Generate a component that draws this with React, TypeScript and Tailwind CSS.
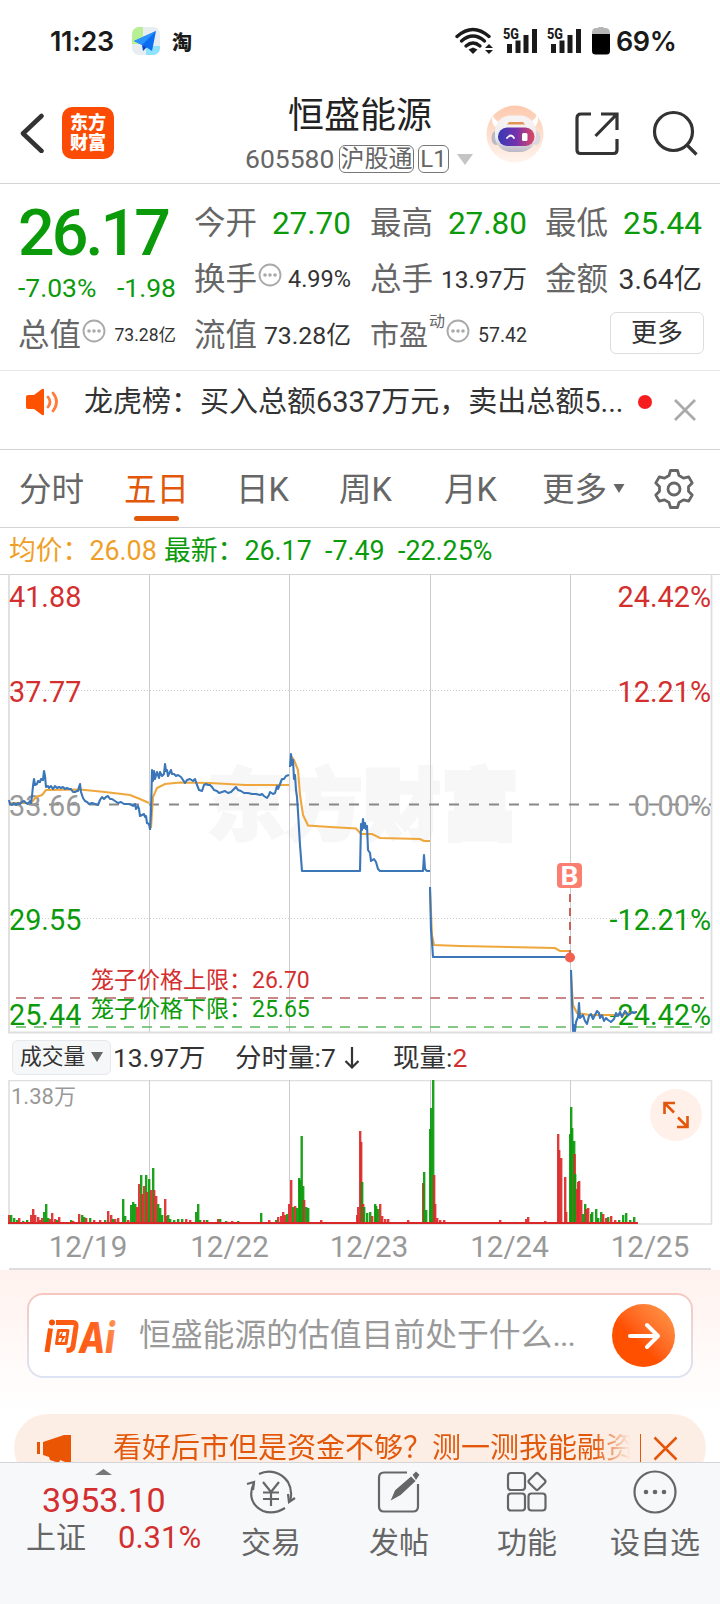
import React from 'react';

type Bar = [number, number, 'r' | 'g'];

const GREEN = '#0a9a0a';
const RED = '#d32f2f';
const DAY_LINES = [149.5, 289.5, 430.5, 570.5];

const PRICE_DAYS = [
  '9,800 10,804 12,805 14,803 16,805 18,803 20,804 22,802 24,801 26,803 28,804 30,801 31,803 32,796 33,786 34,779 35,785 37,784 38,781 40,782 41,779 43,780 44,771 45,776 46,787 48,786 49,788 51,786 53,789 55,786 57,788 59,787 61,788 63,787 65,789 67,788 69,789 71,789 73,792 75,792 77,791 78,791 79,787 80,784 81,792 83,798 85,801 87,802 89,804 92,803 95,804 98,805 100,800 102,797 104,799 106,797 108,796 110,799 112,799 115,801 118,803 121,802 124,804 127,804 130,804 133,806 135,804 136,809 138,806 139,809 140,816 142,815 144,814 145,817 146,816 147,823 149,824 150,829',
  '150,830 151,812 152,770 153,781 154,771 155,779 157,772 159,778 160,772 162,776 164,774 165,764 166,771 167,770 168,776 170,772 171,770 172,774 174,774 176,776 178,775 181,777 183,780 185,783 187,780 190,779 193,781 195,779 197,785 199,790 202,791 204,785 206,784 208,785 210,785 212,787 214,790 217,791 219,793 222,792 225,791 228,793 231,792 234,789 236,787 238,790 241,791 244,793 248,793 252,794 256,794 260,795 262,794 264,796 267,798 269,795 270,792 273,794 275,793 277,786 278,789 280,784 282,779 284,779 286,776 289,775',
  '290,767 291,754 292,765 293,760 294,779 295,775 296,790 297,797 298,812 300,845 302,871 360,871 361,824 362,830 363,819 364,828 365,823 366,829 367,826 368,850 370,853 371,861 374,859 376,862 378,869 380,871 423,871 424,855 425,869 427,871 430,871',
  '430,887 431,930 432,942 433,957 570,957',
  '571,970 572,1001 573,1031 574,1025 575,1031 576,1022 578,1017 579,1003 580,1018 583,1015 585,1021 587,1024 589,1016 591,1014 593,1019 595,1015 597,1011 599,1013 600,1018 602,1015 604,1021 606,1018 608,1020 611,1022 614,1019 616,1013 618,1016 620,1012 622,1017 625,1011 628,1015 630,1014 632,1012 634,1013 636,1012 637,1012',
];

const AVG_DAYS = [
  '9,803 31,803 36,797 42,795 46,790 80,789.5 105,792 130,795 140,799 149,803',
  '151,828 153,797 157,788 165,784 180,782.5 210,783 245,785 289,785',
  '291,756 294,760 298,770 300,795 303,815 308,825.5 330,827 356,828.5 361,834 372,834 380,838 420,839 424,841 430,841',
  '430,890 432,935 434,945 460,946 555,948 560,951 570,951',
  '571,975 573,1005 577,1013 590,1015 620,1015 637,1012',
];

const VOLUME: Bar[] = [
  [9, 9, 'r'], [11, 9, 'g'], [14, 6, 'g'], [17, 4, 'g'], [19, 6, 'r'], [23, 3, 'g'], [27, 4, 'g'], [31, 9, 'r'], [33, 15, 'r'], [35, 9, 'r'], [38, 7, 'r'], [40, 4, 'r'], [42, 6, 'r'], [44, 12, 'g'], [46, 20, 'g'], [48, 6, 'g'], [50, 5, 'r'], [52, 11, 'r'], [55, 5, 'r'], [57, 4, 'g'], [59, 7, 'r'],
  [71, 4, 'g'], [73, 3, 'r'], [79, 10, 'r'], [82, 9, 'g'], [84, 7, 'g'], [86, 6, 'r'], [90, 6, 'g'], [94, 4, 'r'], [100, 4, 'r'], [105, 4, 'g'], [108, 13, 'r'], [111, 9, 'r'], [113, 5, 'g'], [115, 5, 'r'], [118, 6, 'r'], [123, 25, 'g'], [125, 8, 'g'], [128, 4, 'r'],
  [131, 19, 'g'], [133, 22, 'g'], [135, 20, 'g'], [137, 17, 'r'], [139, 40, 'r'], [141, 49, 'g'], [142, 30, 'r'], [144, 38, 'r'], [146, 49, 'g'], [147, 32, 'r'], [149, 45, 'g'], [151, 34, 'r'], [153, 56, 'g'], [154, 34, 'r'], [156, 28, 'r'], [158, 20, 'g'], [160, 16, 'g'], [162, 9, 'g'], [165, 25, 'r'], [166, 8, 'r'], [168, 9, 'g'], [170, 5, 'g'], [174, 4, 'g'], [178, 5, 'g'], [182, 5, 'g'], [186, 5, 'r'], [190, 4, 'r'],
  [196, 12, 'g'], [198, 20, 'g'], [200, 4, 'g'], [204, 4, 'r'], [207, 4, 'g'], [213, 2, 'r'], [218, 5, 'r'], [220, 5, 'g'], [226, 3, 'g'], [232, 3, 'r'], [238, 3, 'g'], [261, 11, 'g'], [269, 4, 'r'], [276, 4, 'g'], [278, 7, 'r'], [281, 8, 'r'], [283, 12, 'r'], [285, 9, 'r'], [287, 10, 'g'], [289, 20, 'r'], [291, 44, 'r'], [293, 17, 'g'], [295, 18, 'r'], [297, 16, 'g'], [299, 46, 'g'], [300, 44, 'g'], [301.5, 88, 'g'], [303, 38, 'g'], [304, 24, 'r'], [306, 17, 'g'], [308, 16, 'g'], [321, 4, 'r'],
  [357, 9, 'r'], [358, 17, 'r'], [360, 93, 'r'], [361, 82, 'r'], [362, 42, 'g'], [363, 20, 'r'], [364, 17, 'g'], [367, 11, 'g'], [370, 12, 'g'], [372, 8, 'r'], [375, 20, 'g'], [376, 18, 'g'], [378, 15, 'g'], [380, 20, 'r'], [382, 8, 'r'], [385, 5, 'r'], [388, 5, 'r'], [408, 4, 'r'], [423, 41, 'r'], [424, 52, 'g'], [426, 14, 'g'], [430, 95, 'g'], [431, 116, 'g'], [433, 144, 'g'], [434, 49, 'r'], [435, 20, 'r'], [437, 6, 'r'], [440, 4, 'r'], [444, 4, 'r'],
  [500, 4, 'r'], [526, 5, 'r'], [528, 7, 'r'], [545, 3, 'r'], [558, 90, 'r'], [559, 74, 'r'], [561, 66, 'r'], [565, 47, 'r'], [566, 12, 'r'], [570, 90, 'g'], [571, 117, 'g'], [572, 96, 'g'], [574, 83, 'g'], [574.5, 70, 'r'], [575, 50, 'g'], [577, 35, 'r'], [578, 42, 'r'], [579, 43, 'r'], [581, 24, 'r'], [583, 10, 'g'], [585, 20, 'g'], [586, 15, 'r'], [588, 16, 'r'], [591, 10, 'g'], [592, 12, 'g'], [596, 15, 'g'], [598, 6, 'g'], [601, 12, 'g'], [603, 10, 'r'], [606, 6, 'r'], [608, 7, 'g'], [611, 8, 'r'], [615, 4, 'r'], [619, 4, 'g'], [623, 9, 'g'], [626, 11, 'g'], [630, 4, 'g'], [634, 7, 'g'],
];

const StatusBar: React.FC = () => (
  <div className="flex h-20 items-start pt-[27px] font-[Inter] text-[27px] leading-[29px] font-semibold text-[#1a1a1a]">
    <span className="ml-[50px] w-[82px] tracking-[-0.300px]">11:23</span>
    <svg width="28" height="28" viewBox="0 0 28 28">
      <defs>
        <clipPath id="mapClip"><rect width="28" height="28" rx="7" /></clipPath>
      </defs>
      <g clipPath="url(#mapClip)">
        <rect width="28" height="28" fill="#e8edf2" />
        <rect width="11" height="17" fill="#b9ef94" />
        <rect x="14" y="19" width="14" height="9" fill="#8fe2fb" />
      </g>
      <path d="M2 14 24 4 20 24 14 20z" fill="#0a6cf0" />
      <path d="M2 14 24 4 10 18z" fill="#2b93ff" />
      <path d="m10 18 1 6 4-4z" fill="#0647c4" />
    </svg>
    <span className="ml-3 w-[30px] font-['Noto_Sans_CJK_SC',sans-serif] text-[20px] font-black">淘</span>
    <svg className="ml-[253px]" width="160" height="30" viewBox="0 0 160 30" fill="none">
      <g stroke="#1a1a1a" strokeWidth="3.400" strokeLinecap="round">
        <path d="M2 9Q18-5 34 9" transform="translate(0 .5)" />
        <path d="M6.500 14Q18 4 29.500 14" />
        <path d="M11 19Q18 13 25 19" />
      </g>
      <path d="m13.500 22.500 4.500-2 4.500 2L18 27z" fill="#1a1a1a" />
      <path d="m34 17 4 4h-8zM34 27l4-4h-8z" fill="#1a1a1a" />
      {[48, 92].map((x) => (
        <g key={x} fill="#1a1a1a">
          <text x={x} y="12" fontFamily="Roboto" fontSize="14.500" fontWeight="800" textLength="16" lengthAdjust="spacingAndGlyphs">5G</text>
          <rect x={x + 4} y="17" width="5" height="9" />
          <rect x={x + 12.500} y="13.500" width="5" height="12.500" />
          <rect x={x + 20.500} y="8" width="5" height="18" />
          <rect x={x + 29} y="2" width="5" height="24" />
        </g>
      ))}
      <path d="M137 6q0-5 4-5h2q1-2 3-2t3 2h2q4 0 4 6v3h-18z" fill="#b5b5b5" />
      <path d="M137 7h18v17q0 3.500-3.500 3.500h-11Q137 27.500 137 24z" fill="#000" />
    </svg>
    <span className="ml-px tracking-[-0.400px]">69%</span>
  </div>
);

const Robot: React.FC = () => (
  <svg width="58" height="58" viewBox="0 0 58 58">
    <defs>
      <linearGradient id="robotBg" x2="0" y2="1"><stop stopColor="#fdc9ad" /><stop offset="1" stopColor="#fff4ef" /></linearGradient>
      <linearGradient id="robotFace"><stop stopColor="#343bb5" /><stop offset=".5" stopColor="#7431ac" /><stop offset="1" stopColor="#df4963" /></linearGradient>
      <linearGradient id="robotHead" x2="0" y2="1"><stop stopColor="#f6f4f4" /><stop offset=".6" stopColor="#f0edf0" /><stop offset="1" stopColor="#b9b8c4" /></linearGradient>
    </defs>
    <circle cx="29" cy="29" r="28.500" fill="url(#robotBg)" />
    <path d="M9 22Q4 16 7 11q3 7 11 7zM49 22q5-6 2-12-3 7-11 8z" fill="#fff" />
    <ellipse cx="10" cy="33" rx="4.500" ry="7" fill="#b9bac4" />
    <ellipse cx="50" cy="33" rx="4.500" ry="7" fill="#dcd8de" />
    <rect x="9" y="10.500" width="41" height="36.500" rx="16" fill="url(#robotHead)" />
    <path d="M23 17h14l2 2.500H21z" fill="#e39455" />
    <rect x="12" y="22.500" width="36.500" height="18.500" rx="9" fill="url(#robotFace)" />
    <path d="M21 33q4-5 7 0" fill="none" stroke="#fff" strokeWidth="1.800" strokeLinecap="round" />
    <rect x="36" y="28" width="5.500" height="8" rx="1.500" fill="#fff" />
  </svg>
);

const Header: React.FC = () => (
  <header className="flex h-[104px] items-start border-b border-[#d4d4d4]">
    <svg className="mt-[33px] ml-5" width="26" height="40" viewBox="0 0 26 40">
      <path d="M21.500 3 3 20.500 21.500 38" fill="none" stroke="#333" strokeWidth="4.500" strokeLinecap="round" strokeLinejoin="round" />
    </svg>
    <div className="mt-[27px] ml-4 h-[52px] w-[52px] rounded-[10px] bg-[#fb4b04] pt-[6px] text-center text-[18px] leading-[20px] font-black text-white">
      东方<br />财富
    </div>
    <div className="ml-[127px] w-[245px] pt-[16px]">
      <div className="ml-[47px] text-[36px] leading-[40px] text-[#222]">恒盛能源</div>
      <div className="mt-[9px] ml-1 flex h-[28px] items-center text-[#666]">
        <span className="w-[94px] text-[26.500px]">605580</span>
        <span className="flex h-[28px] w-[75px] items-center justify-center rounded-md border border-[#777] text-[24px]">沪股通</span>
        <span className="ml-1 flex h-[28px] w-[31px] items-center justify-center rounded-md border border-[#777] text-[24px]">L1</span>
        <svg className="ml-2" width="16" height="11" viewBox="0 0 16 11"><path d="M0 0h16l-8 11z" fill="#c4c4c4" /></svg>
      </div>
    </div>
    <div className="mt-[25px]"><Robot /></div>
    <svg className="mt-[31px] ml-[30px]" width="46" height="46" viewBox="0 0 46 46" fill="none" stroke="#333" strokeWidth="3.200">
      <path d="M17 3H7Q3 3 3 7v32q0 3.500 3.500 3.500h33q3.500 0 3.500-3.500V28" />
      <path d="M27 3h16v16M43 3 21.500 25" />
    </svg>
    <svg className="mt-[30px] ml-[32px]" width="46" height="46" viewBox="0 0 46 46" fill="none" stroke="#333" strokeWidth="3.200">
      <circle cx="21.500" cy="21.500" r="19" /><path d="m34.500 34.500 10 10" />
    </svg>
  </header>
);

const Dots: React.FC = () => (
  <svg width="24" height="24" viewBox="0 0 24 24" fill="#aaa">
    <circle cx="12" cy="12" r="10.500" fill="none" stroke="#aaa" strokeWidth="1.900" />
    <circle cx="7" cy="12" r="1.800" /><circle cx="12" cy="12" r="1.800" /><circle cx="17" cy="12" r="1.800" />
  </svg>
);

interface CellProps {
  label: string;
  value: string;
  info?: boolean;
  valueClass: string;
}

const Cell: React.FC<CellProps> = ({ label, value, info, valueClass }) => (
  <div className="flex h-14 items-center justify-between">
    <span className="-ml-px flex items-center text-[31.500px] text-[#666]">
      {label}
      {info && <span className="-mt-[10px] ml-px"><Dots /></span>}
    </span>
    <span className={valueClass}>{value}</span>
  </div>
);

const Quote: React.FC = () => (
  <section className="flex h-[187px] border-b border-[#e8e8e8] pt-[12px] pl-[19px] whitespace-nowrap">
    <div className="w-[157px]">
      <div className="-ml-px flex h-[73px] items-center pt-[2px] text-[64.500px] leading-none font-medium tracking-[-2.900px] text-[#0a9a0a]">26.17</div>
      <div className="-ml-px flex h-[39px] items-center justify-between pb-px text-[26.500px] text-[#0a9a0a]">
        <span>-7.03%</span><span>-1.98</span>
      </div>
      <Cell label="总值" value="73.28亿" info valueClass="text-[17.500px] text-[#333]" />
    </div>
    <div className="ml-[19px] w-[156px]">
      <Cell label="今开" value="27.70" valueClass="text-[31.500px] text-[#0a9a0a]" />
      <Cell label="换手" value="4.99%" info valueClass="text-[23.500px] text-[#333]" />
      <Cell label="流值" value="73.28亿" valueClass="text-[24.800px] text-[#333]" />
    </div>
    <div className="ml-[20px] w-[156px]">
      <Cell label="最高" value="27.80" valueClass="text-[31.500px] text-[#0a9a0a]" />
      <Cell label="总手" value="13.97万" valueClass="text-[24.500px] text-[#333]" />
      <div className="-ml-px flex h-14 items-center text-[#666]">
        <span className="text-[29px]">市盈</span>
        <span className="-mt-7 ml-px text-[16px]">动</span>
        <span className="-mt-[10px] ml-px"><Dots /></span>
        <span className="ml-auto text-[19.500px] text-[#333]">57.42</span>
      </div>
    </div>
    <div className="ml-[19px] w-[156px]">
      <Cell label="最低" value="25.44" valueClass="text-[31.500px] text-[#0a9a0a]" />
      <Cell label="金额" value="3.64亿" valueClass="text-[28.300px] text-[#333]" />
      <div className="relative left-[2px] mt-[4px] ml-auto flex h-[42px] w-[94px] items-center justify-center rounded-md border border-[#ddd] text-[26px] text-[#333]">更多</div>
    </div>
  </section>
);

const News: React.FC = () => (
  <section className="flex h-[79px] items-start border-b border-[#d4d4d4] pt-[15px]">
    <svg className="mt-0.5 ml-[25px]" width="36" height="28" viewBox="0 0 36 28">
      <path d="M1 9q0-2 2-2h6l8-6q2-1 2 1v24q0 2-2 1l-8-6H3q-2 0-2-2z" fill="#ff5200" />
      <path d="M23 9q4 5 0 10M28 5q7 9 0 18" fill="none" stroke="#ff7a3b" strokeWidth="2.800" strokeLinecap="round" />
    </svg>
    <span className="ml-[23px] w-[550px] text-[29px] leading-[32px] whitespace-nowrap text-[#333]">龙虎榜：买入总额6337万元，卖出总额5...</span>
    <span className="mt-[9px] ml-1 h-[14px] w-[14px] rounded-full bg-[#f51d1d]" />
    <svg className="mt-3 ml-[21px]" width="24" height="24" viewBox="0 0 24 24"><path d="m2 2 20 20M22 2 2 22" stroke="#aaa" strokeWidth="2.800" /></svg>
  </section>
);

const Tabs: React.FC = () => (
  <nav className="flex h-[78px] items-start border-b border-[#d4d4d4] pl-[19px] text-[32.500px] leading-[80px] whitespace-nowrap text-[#666]">
    <span className="w-[105px]">分时</span>
    <span className="relative w-[112px] text-[#e2570a]">
      五日
      <i className="absolute top-[66px] left-[10px] h-[5px] w-[45px] rounded-full bg-[#e2570a]" />
    </span>
    <span className="w-[103px]">日K</span>
    <span className="w-[105px]">周K</span>
    <span className="w-[98px]">月K</span>
    <span className="w-[71px]">更多</span>
    <svg className="mt-[33px]" width="12" height="11" viewBox="0 0 12 11"><path d="M.5 1h11L6 10z" fill="#666" /></svg>
    <svg className="mt-[18px] ml-[28px]" width="42" height="42" viewBox="0 0 42 42" fill="none" stroke="#666" strokeWidth="2.800" strokeLinejoin="round">
      <path d="M17.500 2.500h7l1.500 5 4.500 2.600 5.200-1.200 3.500 6-3.700 3.800v4.600l3.700 3.800-3.500 6-5.200-1.200L26 34.500l-1.500 5h-7l-1.500-5-4.500-2.600-5.200 1.200-3.500-6 3.700-3.800v-4.600l-3.700-3.800 3.500-6 5.200 1.200L16 7.500z" />
      <circle cx="21" cy="21" r="6" />
    </svg>
  </nav>
);

const PriceChart: React.FC = () => (
  <svg className="block font-[Roboto,'Noto_Sans_CJK_SC',sans-serif]" width="720" height="460" viewBox="0 574 720 460" fill="none">
    <text x="207" y="834" fontSize="78" fontWeight="900" fill="#f7f7f7" stroke="#f7f7f7" strokeWidth="3">东方财富</text>
    <path d="M0 574.500H720" stroke="#d4d4d4" />
    <path d="M9 574V1032.500H711.500V574" stroke="#dedede" strokeWidth="1.800" />
    {DAY_LINES.map((x) => <path key={x} d={`M${x} 575V1032`} stroke="#ccc" />)}
    <path d="M9 690.500H711M9 918.500H711" stroke="#ccc" strokeDasharray="1 2" />
    <path d="M9 804.500H711" stroke="#888" strokeWidth="2" strokeDasharray="10 10" />
    <path d="M16 998H704" stroke="#c98787" strokeWidth="2" strokeDasharray="10 8" />
    <path d="M16 1027H704" stroke="#5fb85f" strokeWidth="1.700" strokeDasharray="10 8" />
    <g fontSize="28.800">
      <g fill={RED}>
        <text x="9" y="607">41.88</text>
        <text x="9" y="702">37.77</text>
        <text x="711" y="607" textAnchor="end">24.42%</text>
        <text x="711" y="702" textAnchor="end">12.21%</text>
      </g>
      <g fill="#999">
        <text x="9" y="816">33.66</text>
        <text x="711" y="816" textAnchor="end">0.00%</text>
      </g>
      <g fill={GREEN}>
        <text x="9" y="930">29.55</text>
        <text x="9" y="1025">25.44</text>
        <text x="711" y="930" textAnchor="end">-12.21%</text>
        <text x="711" y="1025" textAnchor="end">-24.42%</text>
      </g>
    </g>
    <text x="91" y="988" fontSize="23" fill={RED}>笼子价格上限：26.70</text>
    <text x="91" y="1017" fontSize="23" fill={GREEN}>笼子价格下限：25.65</text>
    {AVG_DAYS.map((p) => <polyline key={p} points={p} stroke="#efa73c" strokeWidth="2.100" />)}
    {PRICE_DAYS.map((p) => <polyline key={p} points={p} stroke="#3a76b8" strokeWidth="2.100" strokeLinejoin="round" />)}
    <path d="M570 894V953" stroke="#c9605a" strokeWidth="2" strokeDasharray="8 6" />
    <circle cx="570" cy="957.500" r="5" fill="#f4604f" />
    <rect x="557" y="863" width="25" height="25" rx="4" fill="#fa7f70" />
    <text x="569.500" y="884.500" textAnchor="middle" fontSize="25" fontWeight="700" fill="#fff" textLength="18" lengthAdjust="spacingAndGlyphs">B</text>
  </svg>
);

const Volume: React.FC = () => (
  <section className="h-[236px]">
    <div className="flex h-[46px] items-center text-[26.300px] whitespace-nowrap text-[#333]">
      <span className="ml-3 flex h-[35px] w-[99px] items-center rounded-md border border-[#e6e8eb] bg-[#f6f7f9] pl-[7px] text-[21.800px]">
        成交量
        <svg className="ml-[6px]" width="12" height="10" viewBox="0 0 12 10"><path d="M0 0h12L6 10z" fill="#666" /></svg>
      </span>
      <span className="ml-0.5 w-[122px] pt-0.5">13.97万</span>
      <span className="flex w-[158px] items-center pt-0.5 text-[26.500px]">
        分时量:7
        <svg className="ml-[7px]" width="18" height="22" viewBox="0 0 18 22"><path d="M9 0v20M2.500 14 9 20.500 15.500 14" fill="none" stroke="#333" strokeWidth="2.200" /></svg>
      </span>
      <span className="pt-0.5 text-[26.500px]">现量:<span className="text-[#d32f2f]">2</span></span>
    </div>
    <svg className="block font-[Roboto,'Noto_Sans_CJK_SC',sans-serif]" width="720" height="190" viewBox="0 1080 720 190" fill="none">
      <path d="M9 1080.500H711.500V1224H9z" stroke="#dedede" strokeWidth="1.600" />
      {DAY_LINES.map((x) => <path key={x} d={`M${x} 1080V1224`} stroke="#ccc" />)}
      <text x="11" y="1104" fontSize="22" fill="#999">1.38万</text>
      {VOLUME.map(([x, h, c], i) => (
        <rect key={i} x={x - 1} y={1224 - h} width="2.400" height={h} fill={c === 'r' ? '#dc2a2a' : '#0a9a0a'} fillOpacity=".92" />
      ))}
      <path d="M8 1223H638" stroke="#d92626" strokeWidth="2" />
      <g fontSize="29.500" fill="#999" textAnchor="middle">
        <text x="88" y="1257">12/19</text>
        <text x="229.500" y="1257">12/22</text>
        <text x="369" y="1257">12/23</text>
        <text x="509.500" y="1257">12/24</text>
        <text x="650" y="1257">12/25</text>
      </g>
      <path d="M9 1269H711" stroke="#dedede" strokeWidth="2" />
      <circle cx="676" cy="1115" r="26" fill="#fff0e9" />
      <path d="M664.500 1114v-11H675M665 1103.500l9 9M687.500 1116v11H677M687 1126.500l-9-9" stroke="#e2570a" strokeWidth="2.600" />
    </svg>
  </section>
);

const AskAi: React.FC = () => (
  <section className="h-[144px] bg-linear-to-b from-[#fff2ee] to-white px-[27px] pt-[23px]">
    <div className="h-[85px] rounded-2xl bg-linear-to-b from-[#f4c8be] to-[#dde4f5] p-[2px]">
      <div className="flex h-full items-center rounded-[14px] bg-white">
        <svg className="ml-[13px] overflow-visible" width="82" height="42" viewBox="0 0 82 42">
          <defs>
            <linearGradient id="aiInk" gradientUnits="userSpaceOnUse" x1="0" y1="30" x2="78" y2="10"><stop stopColor="#f95405" /><stop offset=".7" stopColor="#ff6420" /><stop offset="1" stopColor="#ff9c61" /></linearGradient>
          </defs>
          <g fill="none" stroke="url(#aiInk)" strokeWidth="5" strokeLinejoin="round">
            <path d="M8.500 13.500 5 37M14 7.500h17q3.500 0 3 4l-3 20q-.7 4-6.500 4" />
            <path d="M16.500 15.500h9.500l-2 13h-9.500z" strokeWidth="3" />
          </g>
          <circle cx="10" cy="7.500" r="3" fill="#f95405" />
          <path d="m21 16-5 7h4l-2 6 6-8h-4z" fill="#f95405" />
          <text x="37" y="37.500" fontFamily="Inter" fontSize="42" fontWeight="800" fontStyle="italic" fill="url(#aiInk)" textLength="36" lengthAdjust="spacingAndGlyphs">Ai</text>
        </svg>
        <span className="ml-[15px] w-[473px] text-[31.800px] whitespace-nowrap text-[#999]">恒盛能源的估值目前处于什么<span className="tracking-[-0.800px]">...</span></span>
        <span className="flex h-[63px] w-[63px] items-center justify-center rounded-full bg-linear-to-tr from-[#ff5000] from-40% to-[#ff9c4b]">
          <svg width="34" height="34" viewBox="0 0 34 34" fill="none" stroke="#fff" strokeWidth="4" strokeLinecap="round" strokeLinejoin="round"><path d="M3 17h28M20 6l11 11-11 11" /></svg>
        </span>
      </div>
    </div>
  </section>
);

const Promo: React.FC = () => (
  <section className="h-[48px] overflow-hidden bg-white px-[14px]">
    <div className="flex h-[68px] items-center rounded-full bg-[#fdeee5] text-[29px] whitespace-nowrap text-[#e2570a]">
      <svg className="ml-[22px]" width="36" height="28" viewBox="0 0 36 28" fill="#ea5504">
        <path d="M1 8h3v12H1zM7 8l21-7h7v27h-6l-5-2-1 3-9-3-1-3-6-2z" />
      </svg>
      <span className="ml-[41px] w-[523px] bg-linear-to-r from-[#e2570a] from-92% to-transparent to-99% bg-clip-text text-transparent">看好后市但是资金不够？测一测我能融资</span>
      <span className="ml-[4px] h-7 w-px bg-[#e2570a]" />
      <svg className="ml-3" width="25" height="25" viewBox="0 0 25 25"><path d="m1.500 1.500 22 22m0-22-22 22" stroke="#e2570a" strokeWidth="2.500" /></svg>
    </div>
  </section>
);

const TAB_ICONS = [
  {
    label: '交易',
    icon: (
      <>
        <path d="M13 4C23-1 35 2 42 12q5 9 2 19M8 13C2 25 6 36 17 41q11 4 22-3" />
        <path d="m1 14 7-2-1 8M49 28l-6 4-1-8" />
        <path d="m17 12 8 10 8-10M17 22.500h16M17 29h16M25 22v14" />
      </>
    ),
  },
  {
    label: '发帖',
    icon: (
      <>
        <path d="M33 2.500H10q-5 0-5 5v29q0 5 5 5h29q5 0 5-5V14" />
        <path d="m19 28 3-7L37 8l3 3-14 13zM40 5l2-2 2 2-2 3z" fill="#666" />
      </>
    ),
  },
  {
    label: '功能',
    icon: (
      <>
        <rect x="6" y="3" width="17" height="17" rx="3" />
        <rect x="6" y="23.500" width="17" height="17" rx="3" />
        <rect x="26.500" y="23.500" width="17" height="17" rx="3" />
        <rect x="28.500" y="5" width="13" height="13" rx="2" transform="rotate(45 35 11.500)" />
      </>
    ),
  },
  {
    label: '设自选',
    icon: (
      <>
        <circle cx="25" cy="22" r="20.500" />
        <g fill="#666" stroke="none"><circle cx="16" cy="22" r="2.300" /><circle cx="25" cy="22" r="2.300" /><circle cx="34" cy="22" r="2.300" /></g>
      </>
    ),
  },
];

const BottomBar: React.FC = () => (
  <footer className="flex h-[142px] border-t border-[#d4d6d9] bg-[#f7f8fa] text-[30px] whitespace-nowrap text-[#666]">
    <div className="w-[207px] pt-[6px]">
      <svg className="ml-[95px] block" width="17" height="6" viewBox="0 0 17 6"><path d="m0 6 8.500-6L17 6z" fill="#777" /></svg>
      <div className="ml-[42px] text-[34px] leading-[50px] text-[#d32f2f]">3953.10</div>
      <div className="flex leading-[26px]">
        <span className="ml-[26px] w-[92px]">上证</span>
        <span className="text-[31px] text-[#d32f2f]">0.31%</span>
      </div>
    </div>
    {TAB_ICONS.map(({ label, icon }) => (
      <div key={label} className="flex w-32 flex-col items-center pt-[7px]">
        <svg width="50" height="44" viewBox="0 0 50 44" fill="none" stroke="#666" strokeWidth="2.200">{icon}</svg>
        <span className="mt-[11px] leading-[36px]">{label}</span>
      </div>
    ))}
  </footer>
);

const App: React.FC = () => {
  return (
    <div className="h-[1604px] w-[720px] overflow-hidden bg-white font-[Roboto,'Noto_Sans_CJK_SC',sans-serif] leading-none">
      <StatusBar />
      <Header />
      <Quote />
      <News />
      <Tabs />
      <div className="flex h-[46px] items-center pt-px pl-[9px] text-[26.800px] whitespace-pre text-[#0a9a0a]">
        <span className="w-[155px] text-[#ef9f27]">均价：26.08</span>
        <span className="w-[161px]">最新：26.17</span>
        <span className="w-[73px]">-7.49</span>
        <span>-22.25%</span>
      </div>
      <PriceChart />
      <Volume />
      <AskAi />
      <Promo />
      <BottomBar />
    </div>
  );
};

export default App;
